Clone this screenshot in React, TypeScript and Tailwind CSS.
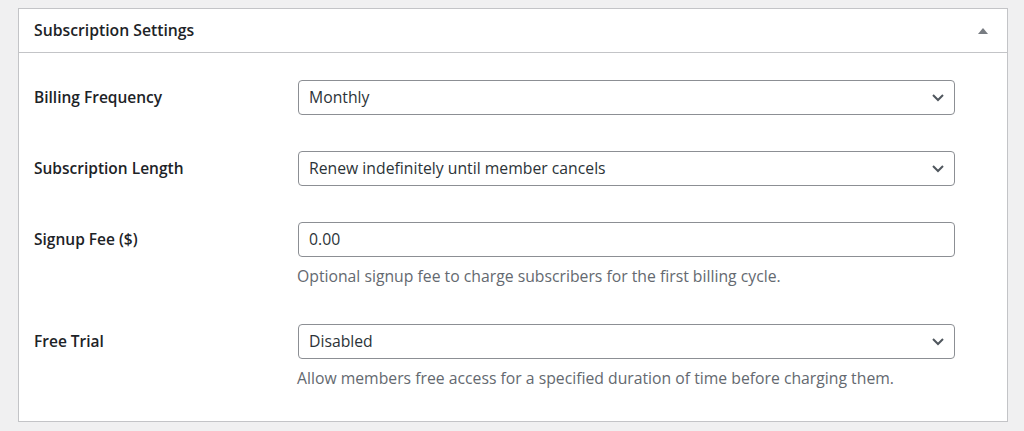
import React from 'react';

const font = { fontFamily: '"Open Sans", "Noto Sans", sans-serif' };

const Chevron = () => (
  <svg width="14" height="9" viewBox="0 0 14 9" className="text-[#50575e]">
    <path d="M2 2l5 5 5-5" fill="none" stroke="currentColor" strokeWidth="2" />
  </svg>
);

const SelectField = ({ value }: { value: string }) => (
  <div className="flex items-center justify-between h-[35px] w-[657px] border border-[#8c8f94] rounded-[4px] pl-[10px] pr-[9px] text-[15.75px] text-[#2c3338] bg-white">
    <span>{value}</span>
    <Chevron />
  </div>
);

const Row = ({ label, children, className = '' }: { label: string; children: React.ReactNode; className?: string }) => (
  <div className={`flex items-start ${className}`}>
    <div className="w-[264px] h-[35px] flex items-center text-[15.5px] font-semibold text-[#1d2327]">{label}</div>
    <div>{children}</div>
  </div>
);

export default function App() {
  return (
    <div className="bg-[#f0f0f1] h-[431px] pt-2 pl-[18px]" style={font}>
      <div className="w-[990px] bg-white border border-[#c3c4c7]">
        {/* Header */}
        <div className="h-[44px] border-b border-[#c3c4c7] flex items-center justify-between pl-[15px] pr-[19px]">
          <h2 className="mt-px text-[15.75px] font-semibold text-[#1d2327]">Subscription Settings</h2>
          <svg width="10" height="6" viewBox="0 0 10 6">
            <path d="M5 0l5 6H0z" fill="#787c82" />
          </svg>
        </div>

        {/* Body */}
        <div className="pl-[15px] pt-[27px] pb-[32px]">
          <Row label="Billing Frequency">
            <SelectField value="Monthly" />
          </Row>
          <Row label="Subscription Length" className="mt-[36px]">
            <SelectField value="Renew indefinitely until member cancels" />
          </Row>
          <Row label="Signup Fee ($)" className="mt-[36px]">
            <div className="flex items-center h-[35px] w-[657px] border border-[#8c8f94] rounded-[4px] px-[10px] text-[15.75px] text-[#2c3338]">
              0.00
            </div>
            <p className="mt-[9px] -ml-px text-[15.75px] leading-[21px] text-[#646970]">
              Optional signup fee to charge subscribers for the first billing cycle.
            </p>
          </Row>
          <Row label="Free Trial" className="mt-[37px]">
            <SelectField value="Disabled" />
            <p className="mt-[9px] -ml-px text-[15.75px] leading-[21px] text-[#646970]">
              Allow members free access for a specified duration of time before charging them.
            </p>
          </Row>
        </div>
      </div>
    </div>
  );
}
